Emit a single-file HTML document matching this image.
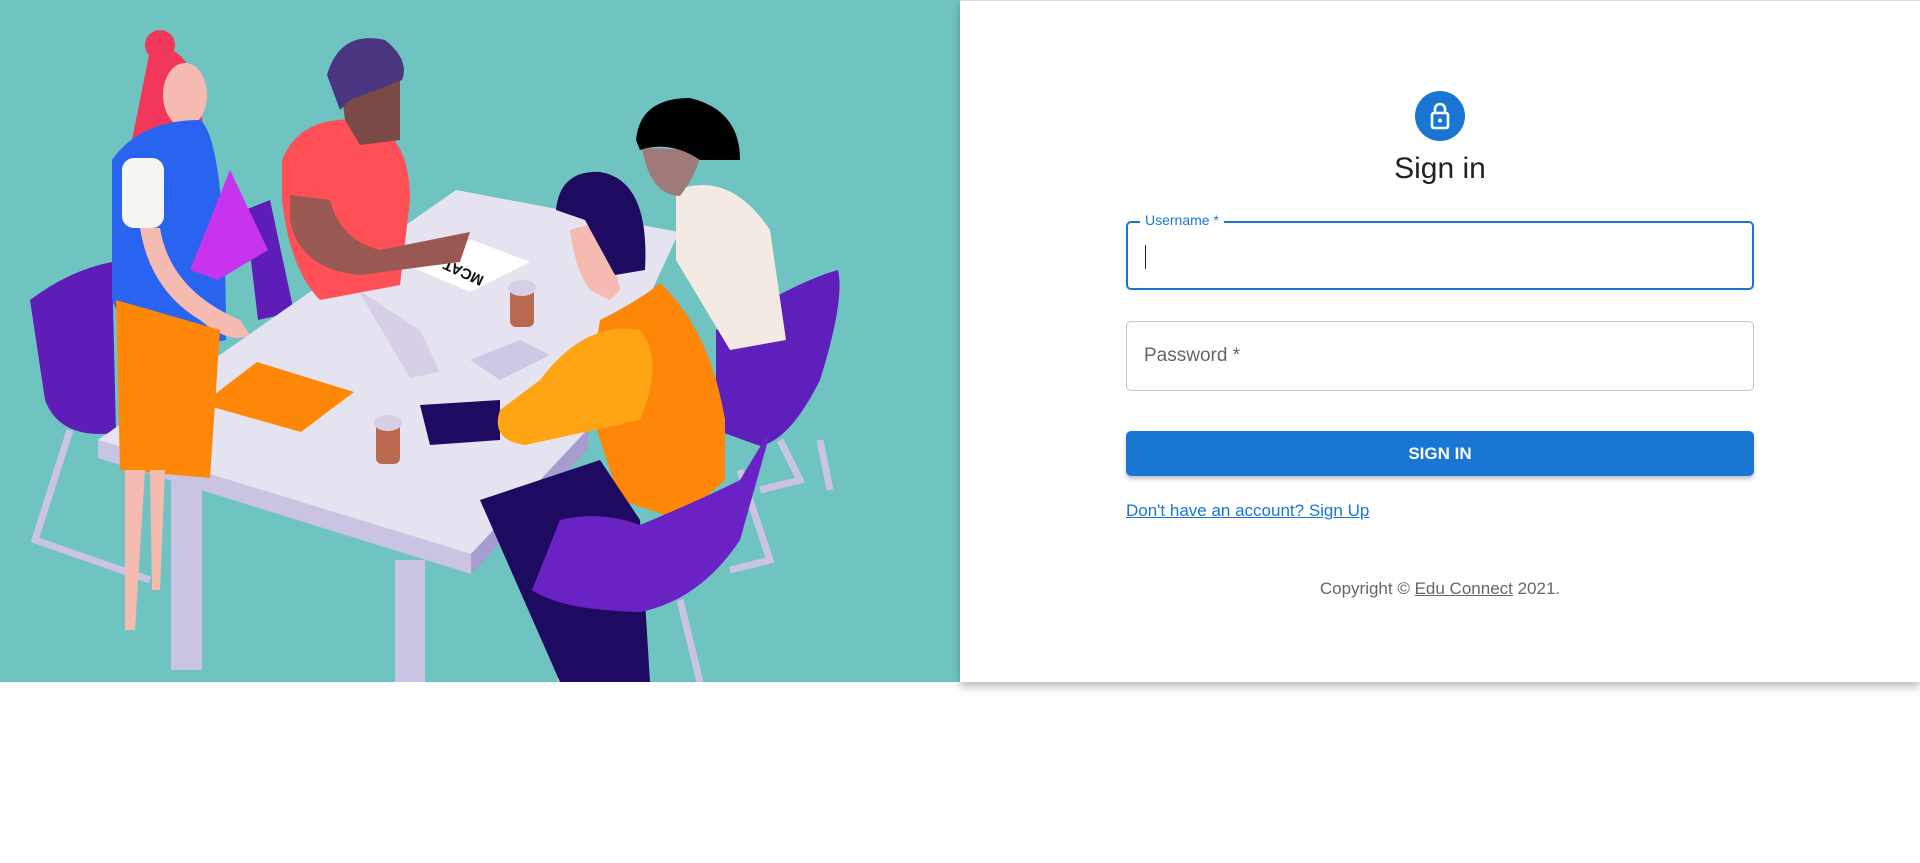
<!DOCTYPE html>
<html><head><meta charset="utf-8"><style>
html,body{margin:0;padding:0;width:1920px;height:863px;background:#fff;overflow:hidden;font-family:"Liberation Sans",Arial,sans-serif}
.left{position:absolute;left:0;top:0;width:960px;height:682px;background:#6fc3c0}
.right{position:absolute;left:960px;top:0;width:960px;height:682px;background:#fff;border-top:1px solid #ddd;box-sizing:border-box;box-shadow:0 5px 8px rgba(0,0,0,.25)}
.av{position:absolute;left:1415px;top:91px;width:50px;height:50px;border-radius:50%;background:#1976d2}
.title{position:absolute;left:1140px;width:600px;top:152px;text-align:center;font-size:30px;color:#222}
.f{position:absolute;left:1126px;width:628px;box-sizing:border-box;border-radius:5px}
.u{top:221px;height:69px;border:2px solid #1976d2}
.u .lab{position:absolute;left:12px;top:-11px;background:#fff;padding:0 5px;font-size:14px;color:#1976d2}
.u .cur{position:absolute;left:17px;top:22px;width:1px;height:24px;background:#222}
.p{top:321px;height:70px;border:1px solid #c4c4c4}
.p span{position:absolute;left:17px;top:23px;font-size:19px;color:#666}
.btn{position:absolute;left:1126px;width:628px;top:431px;height:45px;background:#1976d2;border-radius:5px;box-shadow:0 3px 4px rgba(0,0,0,.25);color:#fff;font-weight:bold;font-size:17px;text-align:center;line-height:45px}
.link{position:absolute;left:1126px;top:501px;font-size:17px;color:#1976d2;text-decoration:underline}
.copy{position:absolute;left:1140px;width:600px;top:579px;text-align:center;font-size:17px;color:#666}
.copy u{color:#666}
</style></head><body>
<div class="left">
<svg width="960" height="682" viewBox="0 0 960 682">
<g fill="none" stroke="#cbc3e3" stroke-width="7">
<path d="M70 430 L35 540 L150 580"/><path d="M600 600 L560 682"/><path d="M680 600 L700 682"/><path d="M780 440 L800 480 L760 490"/><path d="M820 440 L830 490"/><path d="M740 470 L770 560 L730 570"/>
</g>
<path d="M30 300 Q70 270 112 262 L116 433 Q60 440 45 400 Z" fill="#5e1db7"/>
<path d="M245 210 L270 200 L294 312 L258 320 Z" fill="#5e1db7"/>
<path d="M716 330 Q800 280 838 270 Q845 300 820 380 Q790 440 760 446 L716 430 Z" fill="#5f1fbb"/>
<path d="M98 440 L456 190 L679 232 L588 429 L471 554 Z" fill="#e6e3f1"/>
<path d="M98 440 L471 554 L471 574 L98 458 Z" fill="#cbc3e3"/>
<path d="M471 554 L588 429 L588 449 L471 574 Z" fill="#a79ccf"/>
<rect x="171" y="470" width="31" height="200" fill="#cbc3e3"/>
<rect x="395" y="560" width="30" height="122" fill="#cbc3e3"/>
<path d="M202 404 L257 362 L354 392 L301 432 Z" fill="#ff8708"/>
<path d="M400 262 L472 240 L530 262 L470 292 Z" fill="#fff"/>
<text x="472" y="262" font-size="15" font-weight="bold" transform="rotate(205 480 268)" fill="#111">MCAT</text>
<path d="M470 360 L520 340 L550 355 L500 380 Z" fill="#cfc7e6"/>
<path d="M358 290 L420 330 L440 372 L410 378 Z" fill="#d6cfe6"/>
<rect x="510" y="282" width="24" height="45" rx="6" fill="#b96a4e"/><ellipse cx="522" cy="288" rx="14" ry="8" fill="#d7cfe6"/>
<rect x="376" y="420" width="24" height="44" rx="6" fill="#b96a4e"/><ellipse cx="388" cy="423" rx="14" ry="8" fill="#d7cfe6"/>
<path d="M420 405 L500 400 L500 440 L430 445 Z" fill="#1e0a60"/>
<path d="M150 50 Q180 40 195 80 L205 135 L130 150 Z" fill="#f2385a"/>
<circle cx="160" cy="45" r="15" fill="#f2385a"/>
<ellipse cx="185" cy="95" rx="22" ry="32" fill="#f6bbb0"/>
<path d="M112 160 Q140 120 200 120 Q226 140 226 340 Q180 350 130 340 L112 300 Z" fill="#2864f0"/>
<rect x="122" y="158" width="42" height="70" rx="12" fill="#f7f5f0"/>
<path d="M140 228 L160 228 Q170 290 240 320 L250 335 Q230 345 200 320 Q150 290 140 228 Z" fill="#f6bbb0"/>
<path d="M116 300 L220 330 L210 478 L120 470 Z" fill="#ff8708"/>
<path d="M125 470 L145 470 L135 630 L125 630 Z M150 470 L165 470 L160 590 L152 590 Z" fill="#f6bbb0"/>
<path d="M230 170 L268 250 L218 280 L190 270 Z" fill="#c833ee"/>
<path d="M282 160 Q300 115 360 120 Q410 130 410 200 L400 285 L320 300 Q290 270 282 200 Z" fill="#ff5057"/>
<path d="M290 195 L330 200 Q340 240 380 250 L470 232 L460 262 L360 275 Q300 270 290 220 Z" fill="#9a5853"/>
<path d="M340 80 Q370 50 400 80 L400 140 L360 145 L345 120 Z" fill="#7a4a46"/>
<path d="M327 75 Q340 30 385 40 Q410 60 402 80 L350 100 L340 110 Z" fill="#4a3580"/>
<path d="M676 190 Q730 170 770 230 L786 340 L730 350 L676 260 Z" fill="#f3ebe3"/>
<path d="M642 148 Q650 195 680 196 Q700 170 700 150 Z" fill="#a07a78"/>
<path d="M636 140 Q640 98 690 98 Q740 110 740 160 L700 160 Q670 140 640 150 Z" fill="#000"/>
<path d="M600 320 Q640 300 660 283 Q710 330 725 420 L725 480 L680 520 L620 500 L587 400 Z" fill="#ff8708"/>
<path d="M540 380 Q585 320 640 330 Q665 360 640 420 L525 445 Q490 440 500 410 Z" fill="#ffa412"/>
<path d="M480 500 L600 460 L640 520 L650 682 L560 682 Z" fill="#1e0a60"/>
<path d="M570 230 Q575 270 590 290 L610 300 L620 290 L605 220 Z" fill="#f6bbb0"/>
<path d="M556 210 Q560 170 600 172 Q650 180 645 270 L615 275 L585 220 Z" fill="#1e0a60"/>
<path d="M560 520 Q600 510 640 525 Q700 500 740 480 Q770 430 771 430 L740 540 Q700 600 640 612 Q560 610 532 590 Z" fill="#6a22c4"/>
</svg>
</div>
<div class="right"></div>
<div class="av"><svg width="50" height="50" viewBox="0 0 50 50"><rect x="17" y="22" width="16" height="15" rx="2" fill="none" stroke="#fff" stroke-width="2.6"/><path d="M20 22 V18 a5 5 0 0 1 10 0 V22" fill="none" stroke="#fff" stroke-width="2.6"/><circle cx="25" cy="29.5" r="2" fill="#fff"/></svg></div>
<div class="title">Sign in</div>
<div class="f u"><span class="lab">Username *</span><div class="cur"></div></div>
<div class="f p"><span>Password *</span></div>
<div class="btn">SIGN IN</div>
<div class="link">Don't have an account? Sign Up</div>
<div class="copy">Copyright © <u>Edu Connect</u> 2021.</div>
</body></html>
